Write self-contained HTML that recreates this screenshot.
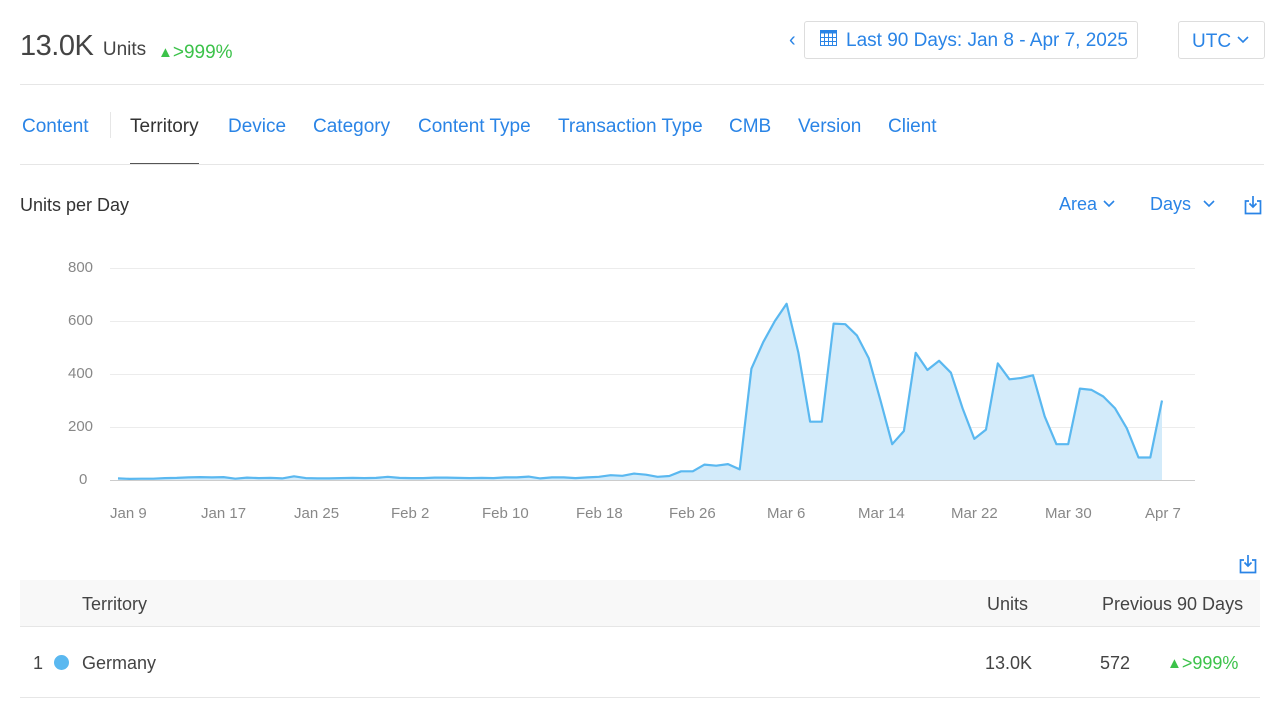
<!DOCTYPE html>
<html><head><meta charset="utf-8"><style>
body{margin:0;width:1280px;height:715px;background:#fff;font-family:"Liberation Sans",sans-serif;position:relative;overflow:hidden;color:#333}
.a{position:absolute;white-space:nowrap}
.b{color:#2a84e6}
.hr{position:absolute;left:20px;width:1244px;height:1px;background:#e6e6e6}
.tab{position:absolute;top:116px;font-size:19px;color:#2a84e6}
.ax{font-size:15px;color:#888;position:absolute}
</style></head><body>
<div class="a" style="left:20px;top:30px;font-size:29px;color:#444;letter-spacing:-0.5px">13.0K <span style="font-size:19px;letter-spacing:0;margin-left:2px">Units</span></div>
<div class="a" style="left:158px;top:42px;font-size:19px;color:#3cc24a"><span style="font-size:15px;position:relative;top:-1px">▲</span>&gt;999%</div>
<div class="a b" style="left:789px;top:29px;font-size:20px">‹</div>
<div class="a" style="left:804px;top:21px;width:332px;height:36px;border:1px solid #ddd;border-radius:3px"></div>
<svg class="a" style="left:820px;top:30px" width="17" height="16" viewBox="0 0 17 16"><rect x="0.5" y="0.5" width="16" height="15" fill="none" stroke="#2a84e6"/><rect x="0.5" y="0.5" width="16" height="3" fill="#2a84e6"/><path d="M4.5 3v13M8.5 3v13M12.5 3v13M0 7.5h17M0 11.5h17" stroke="#2a84e6"/></svg>
<div class="a b" style="left:846px;top:30px;font-size:19px">Last 90 Days: Jan 8 - Apr 7, 2025</div>
<div class="a" style="left:1178px;top:21px;width:85px;height:36px;border:1px solid #ddd;border-radius:3px"></div>
<div class="a b" style="left:1192px;top:31px;font-size:19px">UTC</div>
<svg class="a" style="left:1237px;top:36px" width="12" height="8"><path d="M1 1l5 5 5-5" fill="none" stroke="#2a84e6" stroke-width="1.6"/></svg>
<div class="hr" style="top:84px"></div>
<div class="tab" style="left:22px">Content</div>
<div class="a" style="left:110px;top:112px;width:1px;height:26px;background:#e6e6e6"></div>
<div class="tab" style="left:130px;color:#333">Territory</div>
<div class="a" style="left:130px;top:163px;width:69px;height:2px;background:#555"></div>
<div class="tab" style="left:228px">Device</div>
<div class="tab" style="left:313px">Category</div>
<div class="tab" style="left:418px">Content Type</div>
<div class="tab" style="left:558px">Transaction Type</div>
<div class="tab" style="left:729px">CMB</div>
<div class="tab" style="left:798px">Version</div>
<div class="tab" style="left:888px">Client</div>
<div class="hr" style="top:164px"></div>
<div class="a" style="left:20px;top:195px;font-size:18px;color:#333">Units per Day</div>
<div class="a b" style="left:1059px;top:194px;font-size:18px">Area</div>
<svg class="a" style="left:1103px;top:200px" width="12" height="8"><path d="M1 1l5 5 5-5" fill="none" stroke="#2a84e6" stroke-width="1.6"/></svg>
<div class="a b" style="left:1150px;top:194px;font-size:18px">Days</div>
<svg class="a" style="left:1203px;top:200px" width="12" height="8"><path d="M1 1l5 5 5-5" fill="none" stroke="#2a84e6" stroke-width="1.6"/></svg>
<svg class="a" style="left:1244px;top:195px" width="18" height="20"><path d="M5 6H1.5v12.5h15V6H13M9 1v11M5.5 8.5L9 12l3.5-3.5" fill="none" stroke="#2a84e6" stroke-width="1.7"/></svg>
<svg class="a" style="left:0;top:0" width="1280" height="540" id="ch">
<g stroke="#ececec" stroke-width="1"><path d="M110 268.5H1195M110 321.5H1195M110 374.5H1195M110 427.5H1195"/></g>
<path d="M110 480.5H1195" stroke="#ccc"/>
<path id="ar" fill="#d3ebfa"/><path id="ln" fill="none" stroke="#5ab8f0" stroke-width="2.2" stroke-linejoin="round"/>
</svg>
<div class="ax" style="left:68px;top:259px">800</div>
<div class="ax" style="left:68px;top:312px">600</div>
<div class="ax" style="left:68px;top:365px">400</div>
<div class="ax" style="left:68px;top:418px">200</div>
<div class="ax" style="left:79px;top:471px">0</div>
<div class="ax" style="left:110px;top:505px">Jan 9</div>
<div class="ax" style="left:201px;top:505px">Jan 17</div>
<div class="ax" style="left:294px;top:505px">Jan 25</div>
<div class="ax" style="left:391px;top:505px">Feb 2</div>
<div class="ax" style="left:482px;top:505px">Feb 10</div>
<div class="ax" style="left:576px;top:505px">Feb 18</div>
<div class="ax" style="left:669px;top:505px">Feb 26</div>
<div class="ax" style="left:767px;top:505px">Mar 6</div>
<div class="ax" style="left:858px;top:505px">Mar 14</div>
<div class="ax" style="left:951px;top:505px">Mar 22</div>
<div class="ax" style="left:1045px;top:505px">Mar 30</div>
<div class="ax" style="left:1145px;top:505px">Apr 7</div>
<svg class="a" style="left:1239px;top:554px" width="18" height="20"><path d="M5 6H1.5v12.5h15V6H13M9 1v11M5.5 8.5L9 12l3.5-3.5" fill="none" stroke="#2a84e6" stroke-width="1.7"/></svg>
<div class="a" style="left:20px;top:580px;width:1240px;height:46px;background:#f8f8f8;border-bottom:1px solid #e6e6e6"></div>
<div class="a" style="left:82px;top:594px;font-size:18px;color:#444">Territory</div>
<div class="a" style="left:987px;top:594px;font-size:18px;color:#444">Units</div>
<div class="a" style="left:1102px;top:594px;font-size:18px;color:#444">Previous 90 Days</div>
<div class="a" style="left:33px;top:653px;font-size:18px;color:#444">1</div>
<div class="a" style="left:54px;top:655px;width:15px;height:15px;border-radius:50%;background:#5ab8f0"></div>
<div class="a" style="left:82px;top:653px;font-size:18px;color:#444">Germany</div>
<div class="a" style="left:985px;top:653px;font-size:18px;color:#444">13.0K</div>
<div class="a" style="left:1100px;top:653px;font-size:18px;color:#444">572</div>
<div class="a" style="left:1167px;top:653px;font-size:18px;color:#3cc24a"><span style="font-size:15px;position:relative;top:-1px">▲</span>&gt;999%</div>
<div class="a" style="left:20px;top:697px;width:1240px;height:1px;background:#e6e6e6"></div>
<script>
var v=[6,4,5,5,7,8,10,11,10,11,5,9,7,8,6,14,7,6,6,7,8,7,8,12,8,7,7,9,9,8,7,8,7,10,10,13,6,10,10,7,10,12,18,16,24,20,12,15,33,33,58,54,60,42,40,420,520,600,665,480,220,220,590,588,545,460,300,135,185,480,415,450,405,270,155,190,440,380,385,395,240,135,135,345,340,315,270,195,85,85,300];
v.splice(53,1);
var p="",n=v.length;
for(var i=0;i<n;i++){var x=118+i*(1044/(n-1)),y=480-v[i]*0.265;p+=(i?"L":"M")+x.toFixed(1)+" "+y.toFixed(1);}
document.getElementById("ln").setAttribute("d",p);
document.getElementById("ar").setAttribute("d",p+"L1162 480L118 480Z");
</script>
</body></html>
